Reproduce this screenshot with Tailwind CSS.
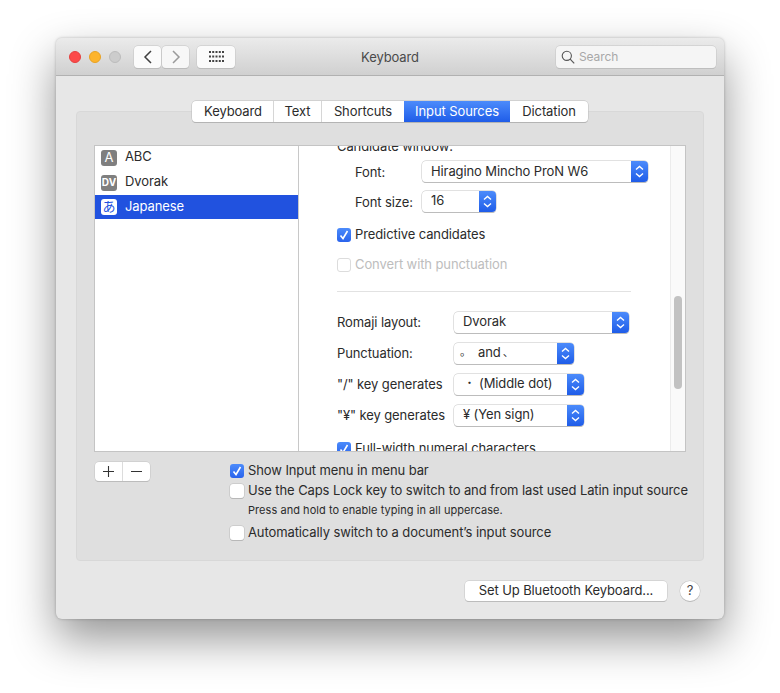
<!DOCTYPE html>
<html lang="en">
<head>
<meta charset="utf-8"/>
<title>Keyboard</title>
<script src="https://cdn.jsdelivr.net/npm/@tailwindcss/browser@4"></script>
</head>
<body class="bg-white overflow-hidden font-['Inter','Noto_Sans_CJK_JP',sans-serif] text-[13px] text-[#2b2b2b] tracking-[-0.1px]">
<div class="w-[780px] h-[693px] pl-[56px] pt-[38px]">
  <div class="w-[668px] h-[581px] rounded-[6px] bg-[#e7e7e7] shadow-[0_20px_45px_rgba(0,0,0,0.42),0_0_3px_rgba(0,0,0,0.25)] overflow-hidden flex flex-col">

    <!-- title bar -->
    <div class="relative h-[38px] shrink-0 flex items-center pl-[13px] pr-[8px] bg-gradient-to-b from-[#ebebeb] to-[#d0d0d0] border-b border-[#b1b1b1]">
      <span class="w-[12px] h-[12px] rounded-full bg-[#fc4a4a] border border-[#e5403f]"></span>
      <span class="ml-[8px] w-[12px] h-[12px] rounded-full bg-[#fdb42c] border border-[#e8a224]"></span>
      <span class="ml-[8px] w-[12px] h-[12px] rounded-full bg-[#cccccc] border border-[#bcbcbc]"></span>
      <button class="ml-[13px] w-[27px] h-[22px] rounded-[4px] bg-[#fbfbfb] shadow-[0_0_0_0.5px_#c4c4c4,0_1px_0_#b4b4b4] flex items-center justify-center">
        <svg width="10" height="14" viewBox="0 0 10 14" fill="none" stroke="#3f3f3f" stroke-width="1.5"><path d="M8 1L2 7l6 6"/></svg>
      </button>
      <button class="ml-[1px] w-[27px] h-[22px] rounded-[4px] bg-[#f7f7f7] shadow-[0_0_0_0.5px_#c4c4c4,0_1px_0_#b4b4b4] flex items-center justify-center">
        <svg width="10" height="14" viewBox="0 0 10 14" fill="none" stroke="#9a9a9a" stroke-width="1.5"><path d="M2 1l6 6-6 6"/></svg>
      </button>
      <button class="ml-[8px] w-[38px] h-[22px] rounded-[4px] bg-[#fbfbfb] shadow-[0_0_0_0.5px_#c4c4c4,0_1px_0_#b4b4b4] flex items-center justify-center">
        <svg width="15" height="11" viewBox="0 0 15 11" fill="#444"><rect x="0" y="0" width="2" height="2"/><rect x="3.2" y="0" width="2" height="2"/><rect x="6.5" y="0" width="2" height="2"/><rect x="9.8" y="0" width="2" height="2"/><rect x="13" y="0" width="2" height="2"/><rect x="0" y="4.5" width="2" height="2"/><rect x="3.2" y="4.5" width="2" height="2"/><rect x="6.5" y="4.5" width="2" height="2"/><rect x="9.8" y="4.5" width="2" height="2"/><rect x="13" y="4.5" width="2" height="2"/><rect x="0" y="9" width="2" height="2"/><rect x="3.2" y="9" width="2" height="2"/><rect x="6.5" y="9" width="2" height="2"/><rect x="9.8" y="9" width="2" height="2"/><rect x="13" y="9" width="2" height="2"/></svg>
      </button>
      <span class="absolute inset-x-0 text-center text-[#4a4a4a] pt-[2px]">Keyboard</span>
      <div class="ml-auto w-[160px] h-[22px] rounded-[4px] bg-[#f5f5f5] shadow-[0_0_0_0.5px_#c4c4c4,0_1px_0_#b8b8b8] flex items-center pl-[5px] gap-[4px] text-[12px] text-[#a8a8a8]">
        <svg width="14" height="14" viewBox="0 0 14 14" fill="none" stroke="#555" stroke-width="1.1"><circle cx="5.8" cy="5.8" r="4.6"/><path d="M9.2 9.2l4 4.2"/></svg>
        <span>Search</span>
      </div>
    </div>

    <!-- body -->
    <div class="flex-1 flex flex-col px-[20px] pt-[25px]">
      <!-- tabs -->
      <div class="relative z-10 -mb-[11px] h-[21px] self-center flex rounded-[4px] bg-white shadow-[0_0_0_0.5px_#bcbcbc,0_1px_0_#adadad] overflow-hidden">
        <span class="w-[82px] pl-[1px] flex items-center justify-center border-r border-[#d6d6d6]">Keyboard</span>
        <span class="w-[48px] flex items-center justify-center border-r border-[#d6d6d6]">Text</span>
        <span class="w-[82px] flex items-center justify-center">Shortcuts</span>
        <span class="w-[106px] flex items-center justify-center text-white bg-gradient-to-b from-[#4c8bfb] to-[#1f5ce8]">Input Sources</span>
        <span class="w-[78px] flex items-center justify-center">Dictation</span>
      </div>

      <!-- panel -->
      <div class="h-[450px] rounded-[4px] bg-[#dfdfdf] border border-[#d8d8d8] flex flex-col px-[17px] pt-[33px]">
        <div class="h-[307px] flex bg-white border border-[#c4c4c4] overflow-hidden">
          <!-- source list -->
          <div class="w-[204px] shrink-0 border-r border-[#c8c8c8] -mt-[1px]">
            <div class="h-[25px] flex items-center pl-[6px] gap-[8px]">
              <span class="w-[16px] h-[16px] rounded-[3px] bg-[#7f7f7f] text-white text-[13px] flex items-center justify-center">A</span>
              <span class="-mt-[2px]">ABC</span>
            </div>
            <div class="h-[25px] flex items-center pl-[6px] gap-[8px]">
              <span class="w-[16px] h-[16px] rounded-[3px] bg-[#7f7f7f] text-white text-[10px] font-bold tracking-normal flex items-center justify-center">DV</span>
              <span class="-mt-[2px]">Dvorak</span>
            </div>
            <div class="h-[24px] flex items-center pl-[6px] gap-[8px] bg-[#2152df] text-white">
              <span class="w-[16px] h-[16px] rounded-[3px] bg-white text-[#2152df] text-[13px] flex items-center justify-center">あ</span>
              <span>Japanese</span>
            </div>
          </div>

          <!-- scrolled settings -->
          <div class="flex-1 overflow-hidden pl-[38px]">
            <div class="-mt-[8px] w-[312px]">
              <div class="h-[16px] leading-[16px]">Candidate window:</div>
              <div class="mt-[7px] flex items-center h-[21px]">
                <span class="w-[85px] pl-[18px] pt-[2px] shrink-0">Font:</span>
                <div class="w-[226px] h-[21px] rounded-[4px] bg-white shadow-[0_0_0_0.5px_#c4c4c4,0_1px_0_#b4b4b4] flex overflow-hidden">
                  <span class="flex-1 pl-[9px] leading-[20px]">Hiragino Mincho ProN W6</span>
                  <span class="w-[17px] bg-gradient-to-b from-[#4c8bfb] to-[#1f5ce8] flex items-center justify-center"><svg width="9" height="13" viewBox="0 0 9 13" fill="none" stroke="#fff" stroke-width="1.4"><path d="M1 4.5L4.5 1.5 8 4.5M1 8.5l3.5 3 3.5-3"/></svg></span>
                </div>
              </div>
              <div class="mt-[9px] flex items-center h-[21px]">
                <span class="w-[85px] pl-[18px] pt-[2px] shrink-0">Font size:</span>
                <div class="w-[74px] h-[21px] rounded-[4px] bg-white shadow-[0_0_0_0.5px_#c4c4c4,0_1px_0_#b4b4b4] flex overflow-hidden">
                  <span class="flex-1 pl-[9px] leading-[19px]">16</span>
                  <span class="w-[17px] bg-gradient-to-b from-[#4c8bfb] to-[#1f5ce8] flex items-center justify-center"><svg width="9" height="13" viewBox="0 0 9 13" fill="none" stroke="#fff" stroke-width="1.4"><path d="M1 4.5L4.5 1.5 8 4.5M1 8.5l3.5 3 3.5-3"/></svg></span>
                </div>
              </div>
              <div class="mt-[16px] flex items-center h-[14px] gap-[4px]">
                <span class="w-[14px] h-[14px] rounded-[3px] bg-gradient-to-b from-[#4c8bfb] to-[#2a63ec] flex items-center justify-center"><svg width="10" height="10" viewBox="0 0 10 10" fill="none" stroke="#fff" stroke-width="1.6"><path d="M1.5 5.5L4 8.5 8.5 1"/></svg></span>
                <span>Predictive candidates</span>
              </div>
              <div class="mt-[16px] flex items-center h-[14px] gap-[4px] text-[#bdbdbd]">
                <span class="w-[14px] h-[14px] rounded-[3px] bg-white border border-[#dcdcdc]"></span>
                <span>Convert with punctuation</span>
              </div>
              <div class="mt-[19px] w-[294px] h-px bg-[#e2e2e2]"></div>
              <div class="mt-[20px] flex items-center h-[21px]">
                <span class="w-[117px] shrink-0">Romaji layout:</span>
                <div class="w-[175px] h-[21px] rounded-[4px] bg-white shadow-[0_0_0_0.5px_#c4c4c4,0_1px_0_#b4b4b4] flex overflow-hidden">
                  <span class="flex-1 pl-[9px] leading-[19px]">Dvorak</span>
                  <span class="w-[17px] bg-gradient-to-b from-[#4c8bfb] to-[#1f5ce8] flex items-center justify-center"><svg width="9" height="13" viewBox="0 0 9 13" fill="none" stroke="#fff" stroke-width="1.4"><path d="M1 4.5L4.5 1.5 8 4.5M1 8.5l3.5 3 3.5-3"/></svg></span>
                </div>
              </div>
              <div class="mt-[10px] flex items-center h-[21px]">
                <span class="w-[117px] shrink-0">Punctuation:</span>
                <div class="w-[120px] h-[21px] rounded-[4px] bg-white shadow-[0_0_0_0.5px_#c4c4c4,0_1px_0_#b4b4b4] flex overflow-hidden">
                  <span class="flex-1 flex pl-[6px] leading-[19px]"><span class="w-[18px] text-[11px]">。</span><span>and</span><span class="ml-[2px] text-[11px]">、</span></span>
                  <span class="w-[17px] bg-gradient-to-b from-[#4c8bfb] to-[#1f5ce8] flex items-center justify-center"><svg width="9" height="13" viewBox="0 0 9 13" fill="none" stroke="#fff" stroke-width="1.4"><path d="M1 4.5L4.5 1.5 8 4.5M1 8.5l3.5 3 3.5-3"/></svg></span>
                </div>
              </div>
              <div class="mt-[10px] flex items-center h-[21px]">
                <span class="w-[117px] shrink-0">"/" key generates</span>
                <div class="w-[130px] h-[21px] rounded-[4px] bg-white shadow-[0_0_0_0.5px_#c4c4c4,0_1px_0_#b4b4b4] flex overflow-hidden">
                  <span class="flex-1 flex pl-[10px] leading-[19px]"><span class="w-[15px] text-[11px]">・</span><span>(Middle dot)</span></span>
                  <span class="w-[17px] bg-gradient-to-b from-[#4c8bfb] to-[#1f5ce8] flex items-center justify-center"><svg width="9" height="13" viewBox="0 0 9 13" fill="none" stroke="#fff" stroke-width="1.4"><path d="M1 4.5L4.5 1.5 8 4.5M1 8.5l3.5 3 3.5-3"/></svg></span>
                </div>
              </div>
              <div class="mt-[10px] flex items-center h-[21px]">
                <span class="w-[117px] shrink-0">"¥" key generates</span>
                <div class="w-[130px] h-[21px] rounded-[4px] bg-white shadow-[0_0_0_0.5px_#c4c4c4,0_1px_0_#b4b4b4] flex overflow-hidden">
                  <span class="flex-1 pl-[9px] leading-[19px]">¥ (Yen sign)</span>
                  <span class="w-[17px] bg-gradient-to-b from-[#4c8bfb] to-[#1f5ce8] flex items-center justify-center"><svg width="9" height="13" viewBox="0 0 9 13" fill="none" stroke="#fff" stroke-width="1.4"><path d="M1 4.5L4.5 1.5 8 4.5M1 8.5l3.5 3 3.5-3"/></svg></span>
                </div>
              </div>
              <div class="mt-[16px] flex items-center h-[14px] gap-[4px]">
                <span class="w-[14px] h-[14px] rounded-[3px] bg-gradient-to-b from-[#4c8bfb] to-[#2a63ec] flex items-center justify-center"><svg width="10" height="10" viewBox="0 0 10 10" fill="none" stroke="#fff" stroke-width="1.6"><path d="M1.5 5.5L4 8.5 8.5 1"/></svg></span>
                <span>Full-width numeral characters</span>
              </div>
            </div>
          </div>

          <!-- scrollbar -->
          <div class="w-[15px] shrink-0 bg-[#fafafa] border-l border-[#ececec] pl-[3px] pt-[150px]">
            <div class="w-[8px] h-[93px] rounded-full bg-[#c2c2c2]"></div>
          </div>
        </div>

        <!-- options under list -->
        <div class="flex mt-[10px]">
          <div class="w-[55px] h-[19px] ml-[1px] flex rounded-[4px] bg-white shadow-[0_0_0_0.5px_#c4c4c4,0_1px_0_#b4b4b4] overflow-hidden shrink-0">
            <span class="flex-1 flex items-center justify-center border-r border-[#dcdcdc]"><svg width="13" height="13" viewBox="0 0 13 13" stroke="#333" stroke-width="1.1"><path d="M6.5 1v11M1 6.5h11"/></svg></span>
            <span class="flex-1 flex items-center justify-center"><svg width="13" height="13" viewBox="0 0 13 13" stroke="#333" stroke-width="1.1"><path d="M1 6.5h11"/></svg></span>
          </div>
          <div class="ml-[80px] pt-[2px] whitespace-nowrap">
            <div class="flex items-center h-[14px] gap-[4px]">
              <span class="w-[14px] h-[14px] rounded-[3px] bg-gradient-to-b from-[#4c8bfb] to-[#2a63ec] flex items-center justify-center"><svg width="10" height="10" viewBox="0 0 10 10" fill="none" stroke="#fff" stroke-width="1.6"><path d="M1.5 5.5L4 8.5 8.5 1"/></svg></span>
              <span>Show Input menu in menu bar</span>
            </div>
            <div class="mt-[6px] flex items-center h-[14px] gap-[4px]">
              <span class="w-[14px] h-[14px] rounded-[3px] bg-white shadow-[0_0_0_0.5px_#bcbcbc,0_1px_0_#b4b4b4]"></span>
              <span>Use the Caps Lock key to switch to and from last used Latin input source</span>
            </div>
            <div class="mt-[5px] pl-[18px] text-[11px] h-[14px] leading-[14px] tracking-[0.05px]">Press and hold to enable typing in all uppercase.</div>
            <div class="mt-[9px] flex items-center h-[14px] gap-[4px]">
              <span class="w-[14px] h-[14px] rounded-[3px] bg-white shadow-[0_0_0_0.5px_#bcbcbc,0_1px_0_#b4b4b4]"></span>
              <span>Automatically switch to a document’s input source</span>
            </div>
          </div>
        </div>
      </div>

      <!-- bottom buttons -->
      <div class="flex justify-end items-center mt-[20px] pr-[4px] gap-[13px]">
        <button class="w-[202px] h-[20px] rounded-[4px] bg-white shadow-[0_0_0_0.5px_#c4c4c4,0_1px_0_#b4b4b4]">Set Up Bluetooth Keyboard...</button>
        <button class="w-[20px] h-[20px] rounded-full bg-white shadow-[0_0_0_0.5px_#c4c4c4,0_1px_0_#b4b4b4] text-[#444]">?</button>
      </div>
    </div>
  </div>
</div>
</body>
</html>
